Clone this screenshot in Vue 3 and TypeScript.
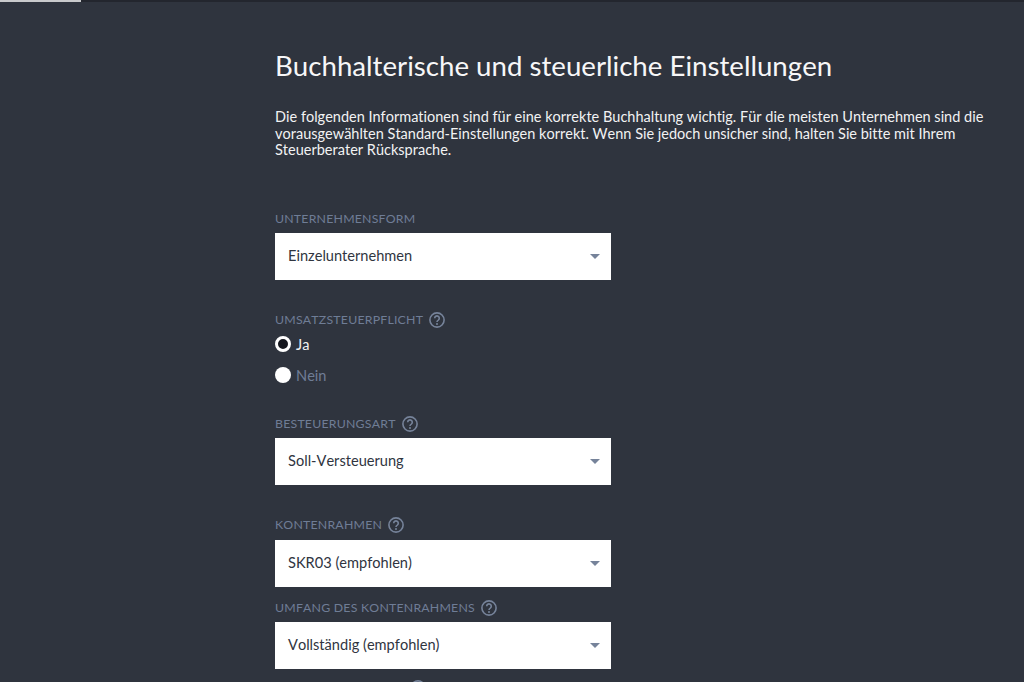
<script setup lang="ts">
interface Field {
  label: string
  value: string
  cls: string
}

const fieldsAfterRadio: Field[] = [
  { label: 'Besteuerungsart', value: 'Soll-Versteuerung', cls: 'f-bes' },
  { label: 'Kontenrahmen', value: 'SKR03 (empfohlen)', cls: 'f-kon' },
  { label: 'Umfang des Kontenrahmens', value: 'Vollständig (empfohlen)', cls: 'f-umf' },
]
</script>

<template>
  <div class="page">
    <div class="topbar"><div class="topbar-progress"></div></div>
    <main class="content">
      <h1 class="title">Buchhalterische und steuerliche Einstellungen</h1>
      <p class="intro">
        Die folgenden Informationen sind für eine korrekte Buchhaltung wichtig. Für die meisten Unternehmen sind die
        vorausgewählten Standard-Einstellungen korrekt. Wenn Sie jedoch unsicher sind, halten Sie bitte mit Ihrem
        Steuerberater Rücksprache.
      </p>

      <section class="field f-unt">
        <div class="label"><span>Unternehmensform</span></div>
        <div class="select">
          <span>Einzelunternehmen</span>
          <i class="caret"></i>
        </div>
      </section>

      <section class="field f-ust">
        <div class="label">
          <span>Umsatzsteuerpflicht</span>
          <svg class="help" viewBox="0 0 16 16" aria-hidden="true">
            <circle cx="8" cy="8" r="7.1" />
            <path d="M5.7 6.2a2.3 2.3 0 1 1 3.6 1.9c-.9.5-1.3 1-1.3 1.9" />
            <circle class="dot" cx="8" cy="12" r="1" />
          </svg>
        </div>
        <div class="radio on"><i class="bullet"></i><span>Ja</span></div>
        <div class="radio off"><i class="bullet"></i><span>Nein</span></div>
      </section>

      <section v-for="f in fieldsAfterRadio" :key="f.label" class="field" :class="f.cls">
        <div class="label">
          <span>{{ f.label }}</span>
          <svg class="help" viewBox="0 0 16 16" aria-hidden="true">
            <circle cx="8" cy="8" r="7.1" />
            <path d="M5.7 6.2a2.3 2.3 0 1 1 3.6 1.9c-.9.5-1.3 1-1.3 1.9" />
            <circle class="dot" cx="8" cy="12" r="1" />
          </svg>
        </div>
        <div class="select">
          <span>{{ f.value }}</span>
          <i class="caret"></i>
        </div>
      </section>

      <div class="clipped-help">
        <svg class="help" viewBox="0 0 16 16" aria-hidden="true">
          <circle cx="8" cy="8" r="7.1" />
        </svg>
      </div>
    </main>
  </div>
</template>

<style>
html, body { margin: 0; background: #2f343e; overflow: hidden; }
</style>

<style scoped>
.page {
  height: 682px;
  overflow: hidden;
  background: #2f343e;
  font-family: Lato, "Open Sans", sans-serif;
  font-variant-ligatures: none;
  font-kerning: none;
  color: #fff;
}
.topbar { height: 2px; background: #23262e; }
.topbar-progress { width: 81px; height: 2px; background: #c9cacc; }
.content { padding: 48px 30px 0 275px; }
.title {
  margin: 0;
  font-size: 27.65px;
  line-height: 32px;
  font-weight: 400;
  color: #f7f7f8;
}
.intro {
  margin: 27px 0 0;
  font-size: 14.5px;
  line-height: 16.5px;
  color: #f2f2f3;
}
.field { display: flex; flex-direction: column; }
.label {
  display: flex;
  align-items: center;
  gap: 6px;
  height: 16px;
  font-size: 12.3px;
  letter-spacing: .22px;
  text-transform: uppercase;
  color: #6f7d96;
}
.help { width: 16px; height: 16px; fill: none; stroke: #76839a; stroke-width: 1.6; }
.help .dot { fill: #76839a; stroke: none; }
.select {
  width: 336px;
  height: 47px;
  box-sizing: border-box;
  margin-top: 6px;
  padding: 0 11px 0 13px;
  display: flex;
  align-items: center;
  justify-content: space-between;
  background: #fff;
  font-size: 14.6px;
  color: #30353f;
}
.select span { padding-bottom: 2px; }
.caret {
  width: 0;
  height: 0;
  border-left: 5px solid transparent;
  border-right: 5px solid transparent;
  border-top: 5px solid #76839a;
}
.f-unt { margin-top: 52px; }
.f-ust { margin-top: 32px; }
.f-bes { margin-top: 33px; }
.f-kon { margin-top: 32px; }
.f-kon .select { margin-top: 7px; }
.f-umf { margin-top: 13px; }
.radio {
  display: flex;
  align-items: center;
  gap: 5px;
  height: 16px;
  margin-top: 8px;
  font-size: 14.6px;
}
.radio span { padding-top: 2px; }
.radio + .radio { margin-top: 15px; }
.bullet {
  width: 16px;
  height: 16px;
  box-sizing: border-box;
  border-radius: 50%;
  background: #fff;
}
.radio.on { color: #f2f2f3; }
.radio.on .bullet { border: 3px solid #fff; background: #14161d; }
.radio.off { color: #6f7d96; }
.clipped-help { margin-top: 11px; padding-left: 135px; height: 16px; }
</style>
